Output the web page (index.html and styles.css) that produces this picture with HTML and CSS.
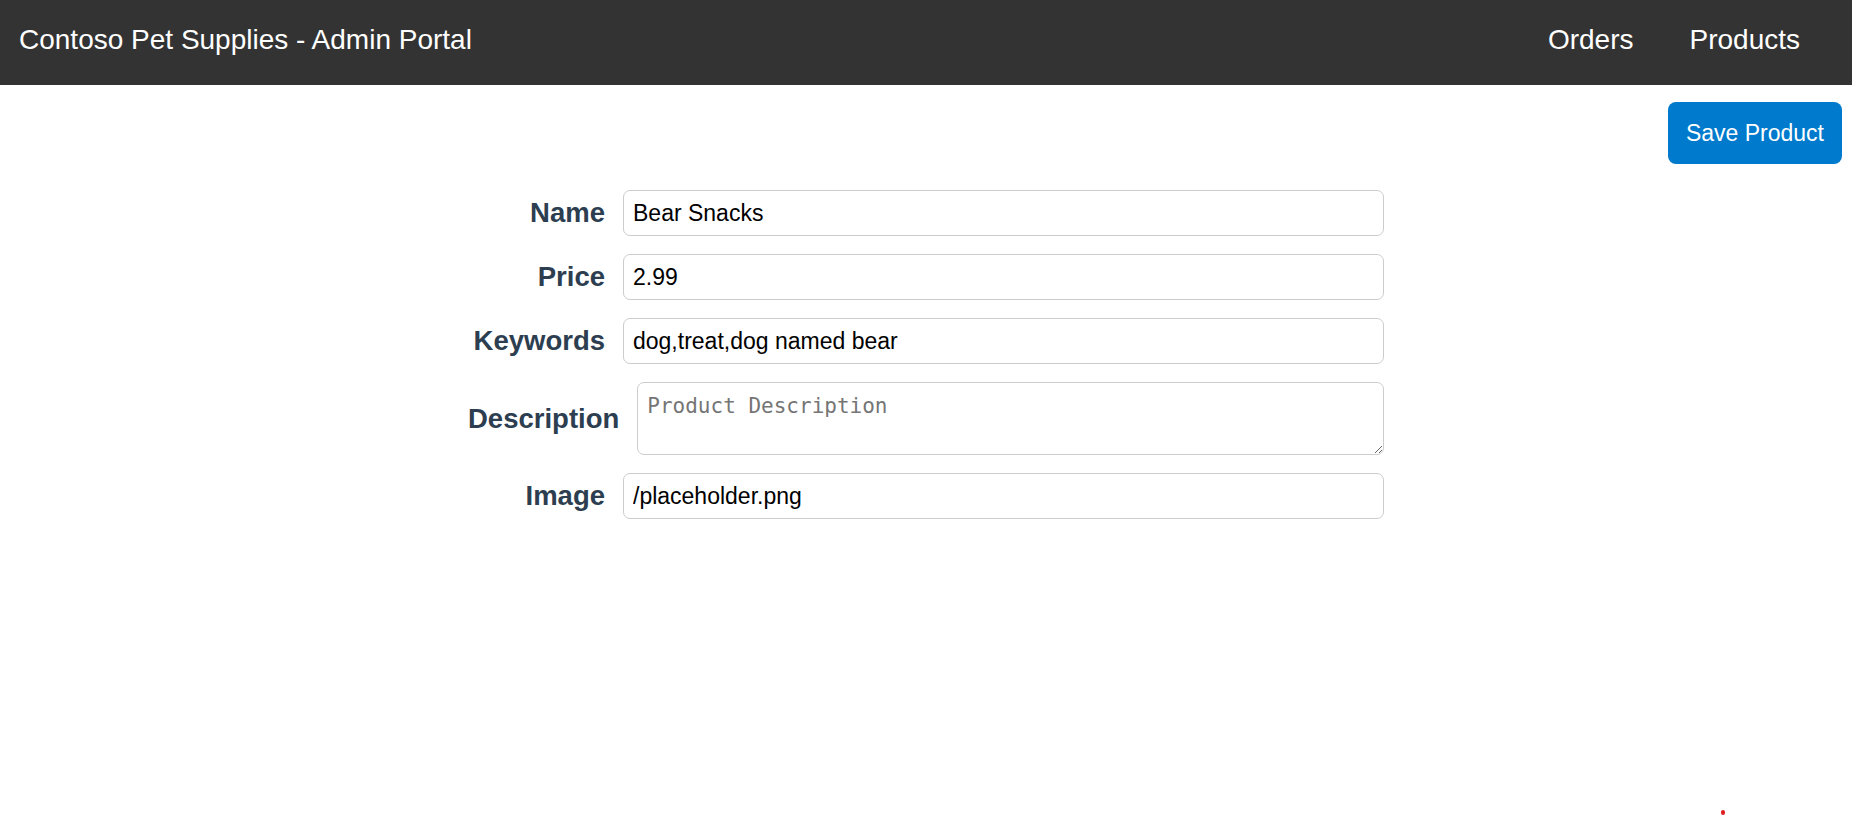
FILE: index.html
```html
<!DOCTYPE html>
<html lang="en">
<head>
<meta charset="utf-8">
<title>Contoso Pet Supplies - Admin Portal</title>
<link rel="stylesheet" href="styles.css">
</head>
<body>
<header class="topbar">
  <div class="brand">Contoso Pet Supplies - Admin Portal</div>
  <nav class="nav">
    <a class="nav-link" href="#">Orders</a>
    <a class="nav-link" href="#">Products</a>
  </nav>
</header>
<main class="page">
  <div class="actions">
    <button class="save-btn" type="button">Save Product</button>
  </div>
  <form class="product-form">
    <div class="row">
      <label class="field-label" for="name">Name</label>
      <input class="field-input" id="name" type="text" value="Bear Snacks">
    </div>
    <div class="row">
      <label class="field-label" for="price">Price</label>
      <input class="field-input" id="price" type="text" value="2.99">
    </div>
    <div class="row">
      <label class="field-label" for="keywords">Keywords</label>
      <input class="field-input" id="keywords" type="text" value="dog,treat,dog named bear">
    </div>
    <div class="row">
      <label class="field-label" for="description">Description</label>
      <textarea class="field-textarea" id="description" placeholder="Product Description"></textarea>
    </div>
    <div class="row">
      <label class="field-label" for="image">Image</label>
      <input class="field-input" id="image" type="text" value="/placeholder.png">
    </div>
  </form>
</main>
<span class="stray-dot"></span>
</body>
</html>
```
FILE: styles.css
```css
html, body {
  margin: 0;
  padding: 0;
  background: #ffffff;
}

body {
  font-family: "Liberation Sans", Arial, sans-serif;
  color: #2c3e50;
  min-height: 815px;
  position: relative;
  overflow: hidden;
}

.topbar {
  height: 85px;
  box-sizing: border-box;
  background: #333333;
  display: flex;
  align-items: center;
  justify-content: space-between;
  padding: 0 52px 5px 19px;
}

.brand {
  color: #ffffff;
  font-size: 28px;
}

.nav {
  display: flex;
  gap: 56px;
}

.nav-link {
  color: #ffffff;
  font-size: 28px;
  text-decoration: none;
}

.actions {
  display: flex;
  justify-content: flex-end;
  padding: 17px 10px 0 0;
}

.save-btn {
  height: 62px;
  padding: 0 18px;
  background: #007acc;
  color: #ffffff;
  border: none;
  border-radius: 8px;
  font-family: "Liberation Sans", Arial, sans-serif;
  font-size: 23px;
  cursor: pointer;
}

.product-form {
  width: 916px;
  margin: 26px auto 0;
  display: flex;
  flex-direction: column;
  gap: 18px;
}

.row {
  display: flex;
  align-items: center;
  gap: 18px;
}

.field-label {
  flex: 0 0 auto;
  min-width: 137px;
  text-align: right;
  font-size: 27.5px;
  font-weight: bold;
  color: #2c3e50;
}

.field-input {
  flex: 1 1 auto;
  min-width: 0;
  box-sizing: border-box;
  height: 46px;
  padding: 0 9px;
  border: 1px solid #cccccc;
  border-radius: 7px;
  font-family: "Liberation Sans", Arial, sans-serif;
  font-size: 23px;
  color: #000000;
  background: #ffffff;
  outline: none;
}

.field-textarea {
  flex: 1 1 auto;
  min-width: 0;
  box-sizing: border-box;
  height: 73px;
  padding: 11px 9px;
  border: 1px solid #cccccc;
  border-radius: 7px;
  font-family: "DejaVu Sans Mono", "Liberation Mono", monospace;
  font-size: 21px;
  color: #000000;
  background: #ffffff;
  outline: none;
}

.field-textarea::placeholder {
  color: #757575;
}

.stray-dot {
  position: absolute;
  left: 1721px;
  top: 810px;
  width: 4px;
  height: 5px;
  background: #e02020;
  border-radius: 2px;
}
```
